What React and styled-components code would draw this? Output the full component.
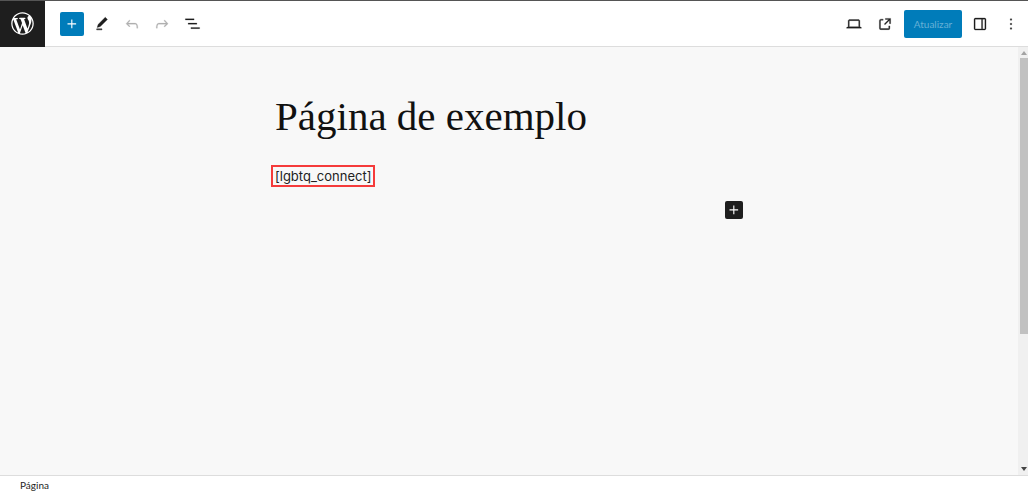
import React from "react";
import styled, { createGlobalStyle } from "styled-components";

const Global = createGlobalStyle`
  *, *::before, *::after { box-sizing: border-box; }
  body { margin: 0; background: #fff; color: #1e1e1e; font-family: Lato, "Noto Sans", sans-serif; }
  button { font: inherit; color: inherit; padding: 0; border: 0; cursor: pointer; }
  h1, p { margin: 0; }
`;

const Page = styled.div`
  display: flex;
  flex-direction: column;
  min-height: 100vh;
`;

const Header = styled.header`
  display: flex;
  align-items: center;
  justify-content: space-between;
  height: 47px;
  padding-right: 4px;
  background: #fff;
  border-top: 1px solid #555;
  border-bottom: 1px solid #ddd;
`;

const Group = styled.div`
  display: flex;
  align-items: center;
  gap: ${(p) => p.$gap}px;
  height: 44px;
`;

const HomeLink = styled.a`
  display: grid;
  place-items: center;
  width: 45px;
  height: 46px;
  margin-right: 9px;
  color: #fff;
  background: #1e1e1e;
`;

const IconButton = styled.button`
  display: grid;
  place-items: center;
  width: ${(p) => p.$width || 24}px;
  height: 24px;
  border-radius: 2px;
  background: ${(p) => (p.$primary ? "#007cba" : "transparent")};
  color: ${(p) => (p.$primary ? "#fff" : "#1e1e1e")};
  &:disabled { color: #b0b0b0; cursor: default; }
`;

const UpdateButton = styled.button`
  width: 58px;
  height: 28px;
  margin-left: 1px;
  border-radius: 2px;
  background: #007cba;
  font-size: 10px;
  line-height: 28px;
  &:disabled { color: #66b0d6; cursor: default; }
`;

const Editor = styled.div`
  display: flex;
  flex: 1;
  background: #f8f8f8;
`;

const Canvas = styled.main`
  flex: 1;
  padding: 45px 24px 24px;
`;

const Content = styled.article`
  max-width: 468px;
  margin: 0 auto;
`;

const Title = styled.h1`
  color: #111;
  font-family: "Liberation Serif", serif;
  font-size: 41px;
  font-weight: 400;
  line-height: 48px;
`;

const Shortcode = styled.p`
  width: fit-content;
  margin: 25px 0 14px -4px;
  padding: 0 2px;
  border: 2px solid #f53b3b;
  color: #222;
  font-family: Inter, sans-serif;
  font-size: 13px;
  line-height: 18px;
`;

const Inserter = styled.button`
  display: grid;
  place-items: center;
  width: 18px;
  height: 18px;
  margin-left: auto;
  border-radius: 2px;
  background: #1e1e1e;
  && { color: #fff; }
`;

const Scrollbar = styled.div`
  display: flex;
  flex-direction: column;
  width: 10px;
  padding-left: 2px;
  background: #f0f0f0;
`;

const Arrow = styled.svg`
  display: block;
  width: 8px;
  height: 11px;
  fill: ${(p) => p.$color};
`;

const Track = styled.div`
  flex: 1;
  display: flex;
  flex-direction: column;
`;

const Thumb = styled.div`
  flex: 0 0 68%;
  background: #c1c1c1;
`;

const Footer = styled.footer`
  height: 19px;
  padding-left: 20px;
  border-top: 1px solid #ddd;
  background: #fff;
  font-size: 10px;
  line-height: 18px;
`;

const paths = {
  wordpress:
    "M20 10c0-5.51-4.49-10-10-10C4.48 0 0 4.49 0 10c0 5.52 4.48 10 10 10 5.51 0 10-4.48 10-10zM7.78 15.37L4.37 6.22c.55-.02 1.17-.08 1.17-.08.5-.06.44-1.13-.06-1.11 0 0-1.45.11-2.37.11-.18 0-.37 0-.58-.01C4.12 2.69 6.87 1.11 10 1.11c2.33 0 4.45.87 6.05 2.34-.68-.11-1.65.39-1.65 1.58 0 .74.45 1.36.9 2.1.35.61.55 1.36.55 2.46 0 1.49-1.4 5-1.4 5l-3.03-8.37c.54-.02.82-.17.82-.17.5-.05.44-1.25-.06-1.22 0 0-1.44.12-2.38.12-.87 0-2.33-.12-2.33-.12-.5-.03-.56 1.2-.06 1.22l.92.08 1.26 3.41zM17.41 10c.24-.64.74-1.87.43-4.25.7 1.29 1.05 2.71 1.05 4.25 0 3.29-1.73 6.24-4.4 7.78.97-2.59 1.94-5.2 2.92-7.78zM6.1 18.09C3.12 16.65 1.11 13.53 1.11 10c0-1.3.23-2.48.72-3.59C3.25 10.3 4.67 14.2 6.1 18.09zm4.03-6.63l2.58 6.98c-.86.29-1.76.45-2.71.45-.79 0-1.57-.11-2.29-.33.81-2.38 1.62-4.74 2.42-7.1z",
  plus: "M11 12.5V17.5H12.5V12.5H17.5V11H12.5V6H11V11H6V12.5H11Z",
  pencil: "m20.1 5.1L16.9 2 6.2 12.7l-1.3 4.4 4.5-1.3L20.1 5.1zM4 20.8h8v-1.5H4v1.5z",
  undo: "M18.3 11.7c-.6-.6-1.4-.9-2.3-.9H6.7l2.9-3.3-1.1-1-4.5 5L8.5 16l1-1-2.7-2.7H16c.5 0 .9.2 1.3.5 1 1 1 3.4 1 4.5v.3h1.5v-.2c0-1.5 0-4.3-1.5-5.7z",
  redo: "M15.6 6.5l-1.1 1 2.9 3.3H8c-.9 0-1.7.3-2.3.9-1.4 1.5-1.4 4.2-1.4 5.6v.2h1.5v-.3c0-1.1 0-3.5 1-4.5.3-.3.7-.5 1.3-.5h9.2L14.5 15l1.1 1.1 4.6-4.6-4.6-5z",
  list: "M3 6h11v1.5H3V6Zm3.5 5.5h11V13h-11v-1.5ZM21 17H10v1.5h11V17Z",
  desktop:
    "M20.5 16h-.7V8c0-1.1-.9-2-2-2H6.2c-1.1 0-2 .9-2 2v8h-.7c-.8 0-1.5.7-1.5 1.5h20c0-.8-.7-1.5-1.5-1.5zM5.7 8c0-.3.2-.5.5-.5h11.6c.3 0 .5.2.5.5v7.6H5.7V8z",
  external:
    "M19.5 4.5h-7V6h4.44l-5.97 5.97 1.06 1.06L18 7.06v4.44h1.5v-7Zm-13 1a2 2 0 0 0-2 2v10a2 2 0 0 0 2 2h10a2 2 0 0 0 2-2v-3H17v3a.5.5 0 0 1-.5.5h-10a.5.5 0 0 1-.5-.5v-10a.5.5 0 0 1 .5-.5h3V5.5h-3Z",
  sidebar:
    "M18 4H6c-1.1 0-2 .9-2 2v12c0 1.1.9 2 2 2h12c1.1 0 2-.9 2-2V6c0-1.1-.9-2-2-2zm-4 14.5H6c-.3 0-.5-.2-.5-.5V6c0-.3.2-.5.5-.5h8v13zm4.5-.5c0 .3-.2.5-.5.5h-2.5v-13H18c.3 0 .5.2.5.5v12z",
  more: "M13 19h-2v-2h2v2zm0-6h-2v-2h2v2zm0-6h-2V5h2v2z",
};

const Glyph = styled.svg`
  display: block;
  fill: currentColor;
  stroke: currentColor;
  stroke-width: ${(p) => p.$weight};
`;

const Icon = ({ name, size = 18, weight = 0, viewBox = "0 0 24 24" }) => (
  <Glyph width={size} height={size} viewBox={viewBox} $weight={weight} aria-hidden="true">
    <path d={paths[name]} />
  </Glyph>
);

export default function App() {
  return (
    <>
      <Global />
      <Page>
        <Header>
          <Group $gap={6}>
            <HomeLink href="#" aria-label="WordPress">
              <Icon name="wordpress" size={27} viewBox="-2 -2 24 24" />
            </HomeLink>
            <IconButton $primary aria-label="Inserir bloco"><Icon name="plus" /></IconButton>
            <IconButton aria-label="Ferramentas"><Icon name="pencil" size={16} weight={0.6} /></IconButton>
            <IconButton disabled aria-label="Desfazer"><Icon name="undo" weight={0.3} /></IconButton>
            <IconButton disabled aria-label="Refazer"><Icon name="redo" weight={0.3} /></IconButton>
            <IconButton aria-label="Visão em lista"><Icon name="list" size={19} weight={0.3} /></IconButton>
          </Group>
          <Group $gap={5}>
            <IconButton $width={26} aria-label="Visualizar"><Icon name="desktop" weight={0.4} /></IconButton>
            <IconButton $width={26} aria-label="Ver página"><Icon name="external" weight={0.4} /></IconButton>
            <UpdateButton disabled>Atualizar</UpdateButton>
            <IconButton $width={26} aria-label="Configurações"><Icon name="sidebar" weight={0.4} /></IconButton>
            <IconButton $width={26} aria-label="Opções"><Icon name="more" weight={0.3} /></IconButton>
          </Group>
        </Header>
        <Editor>
          <Canvas>
            <Content>
              <Title>Página de exemplo</Title>
              <Shortcode>[lgbtq_connect]</Shortcode>
              <Inserter aria-label="Adicionar bloco"><Icon name="plus" /></Inserter>
            </Content>
          </Canvas>
          <Scrollbar aria-hidden="true">
            <Arrow viewBox="0 0 8 11" $color="#a3a3a3"><path d="M1 8L4 4L7 8Z" /></Arrow>
            <Track><Thumb /></Track>
            <Arrow viewBox="0 0 8 11" $color="#444"><path d="M1 3H7L4 7Z" /></Arrow>
          </Scrollbar>
        </Editor>
        <Footer>Página</Footer>
      </Page>
    </>
  );
}
